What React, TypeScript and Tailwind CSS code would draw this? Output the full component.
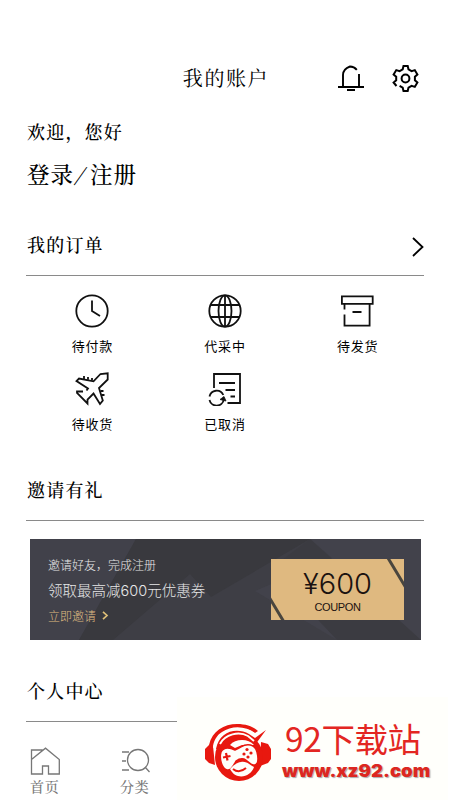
import type { ReactNode } from "react";

const serif = "font-['Noto_Serif_CJK_SC','Liberation_Serif','Noto_Sans_CJK_SC',serif]";
const sans = "font-['Noto_Sans_CJK_SC',sans-serif]";

function BellIcon() {
  return (
    <svg width="26" height="27" viewBox="0 0 26 27" fill="none" stroke="#000" strokeWidth="1.9">
      <path d="M5 21.5V10C5 5.5 8 3 12 1.5C15 1.6 17 2.7 18.8 4.8M21 9V21.5" />
      <path d="M0 22H26M9 25H17" />
    </svg>
  );
}

function GearIcon() {
  return (
    <svg width="27" height="27" viewBox="0 0 27 27" fill="none" stroke="#000" strokeWidth="2">
      <path d="M4.5 21L1.6 17.5L4.2 15.2V11.8L1.6 9.5L4.3 5.1L7.6 6.1L10.7 4.3L11.5 1H15.7L16.5 4.3L19.6 6.1L22.8 5.1L25.4 9.5L22.9 11.8V15.2L25.4 17.5L22.8 21.9L19.6 20.9L16.5 22.7L15.7 26H11.5L10.7 22.7L7.6 20.9" />
      <circle cx="13.5" cy="13.5" r="3.9" />
    </svg>
  );
}

function ClockIcon() {
  return (
    <>
      <circle cx="17" cy="17" r="15.7" />
      <path d="M17 6.5V17L25 22" />
    </>
  );
}

function GlobeIcon() {
  return (
    <>
      <circle cx="17" cy="17" r="15.7" />
      <ellipse cx="17" cy="17" rx="6.5" ry="15.7" />
      <path d="M17 1V33M3 11H31M3 23H31" />
    </>
  );
}

function BoxIcon() {
  return <path d="M.9 2.3H31.7V9.8H.9ZM3.5 10V15.5M3.5 20.5V31.7H28.6V10M11.5 18H20.5" />;
}

function PlaneIcon() {
  return (
    <>
      <path d="M11.5 18.5L13 16.5L1.5 9L4 6.5L18.5 9.3L25.5 2L32.7 1.3V7.5L24 16L27.8 28.5L25 32L18.5 21.5L12.5 27.5V31.5L2 21V19.5H8" />
      <path d="M9 7V4M13 7.8V5M17 8.5V6M25.5 19H28.5M26.5 23H29.5" />
    </>
  );
}

function CancelIcon() {
  return (
    <>
      <path d="M6 16V2H32V31H19.5M11 11H27M17.5 18H27M22.5 24.5H27" />
      <path d="M1.5 24.5A7.3 7.3 0 0 1 15.3 23M15.8 27.5A7.3 7.3 0 0 1 1.5 28" />
      <path d="M12 27.5L16 24.5L18 29Z" fill="#111" strokeWidth=".8" />
    </>
  );
}

const orders: { label: string; icon: ReactNode }[] = [
  { label: "待付款", icon: <ClockIcon /> },
  { label: "代采中", icon: <GlobeIcon /> },
  { label: "待发货", icon: <BoxIcon /> },
  { label: "待收货", icon: <PlaneIcon /> },
  { label: "已取消", icon: <CancelIcon /> },
];

function SectionTitle({ title, arrow }: { title: string; arrow?: boolean }) {
  return (
    <div className="flex h-[54px] items-start justify-between border-b border-[#8a8a8a]">
      <h2 className={`${serif} pl-px text-[18px] leading-[44px] font-medium tracking-[1.2px]`}>{title}</h2>
      {arrow && (
        <svg className="mt-[15px]" width="12" height="20" viewBox="0 0 12 20" fill="none" stroke="#000" strokeWidth="1.8">
          <path d="M1 1L10.5 10L1 19" />
        </svg>
      )}
    </div>
  );
}

function Coupon() {
  return (
    <div className="relative h-[61px] w-[133px] overflow-hidden bg-[#dfb980] text-center text-[#1b1210]">
      <svg className="absolute inset-0" width="133" height="61" stroke="#4a463e" strokeWidth="3">
        <path d="M117 -1L135 29M-2 38L13 63" />
      </svg>
      <div className="mt-[9px] font-['Inter','Liberation_Sans',sans-serif] text-[29px] leading-[32px] font-light">¥600</div>
      <div className="font-['Liberation_Sans',sans-serif] text-[11px] leading-[14px] tracking-[-0.4px]">COUPON</div>
    </div>
  );
}

function Banner() {
  return (
    <div className={`${sans} relative mt-[18px] ml-1 flex h-[101px] w-[391px] items-center overflow-hidden bg-[#3e3e45]`}>
      <svg className="absolute inset-0" width="391" height="101">
        <path d="M0 0H106L49 101H0Z" fill="#41414a" />
        <path d="M106 0H280L181 58L160 35L83 101H49Z" fill="#39393e" />
        <path d="M280 0H391V101H307L225 52L302 19Z" fill="#42424b" />
        <path d="M280 0L391 101H307L240 30Z" fill="#3b3b41" />
      </svg>
      <div className="relative w-[222px] pt-[2px] pl-[18px] font-light text-[#e7e7e8]">
        <p className="text-[12px] leading-[20px]">邀请好友，完成注册</p>
        <p className="mt-[3px] font-['Inter','Noto_Sans_CJK_SC',sans-serif] text-[14.5px] leading-[26px] whitespace-nowrap">
          领取最高减600元优惠券
        </p>
        <p className="mt-px flex items-center text-[12px] leading-[22px] text-[#dfb980]">
          立即邀请
          <svg className="ml-[6px]" width="7" height="9" viewBox="0 0 7 9" fill="none" stroke="#dfc078" strokeWidth="1.7">
            <path d="M1 .8L5 4.5L1 8.2" />
          </svg>
        </p>
      </div>
      <div className="relative ml-[19px]">
        <Coupon />
      </div>
    </div>
  );
}

function TabBar() {
  return (
    <nav className={`${serif} flex gap-[60px] pl-[30px] text-[14px] leading-[20px] font-medium tracking-[.8px] text-[#777]`}>
      <div className="w-[30px]">
        <svg width="30" height="29" viewBox="0 0 30 29" fill="none" stroke="#777" strokeWidth="1.3">
          <path d="M1.5 12.5L15.5 1.2L29.3 12.5V27H18.5V19H12.5V27H1.5ZM1.5 12.5V3H12.5" />
        </svg>
        <span className="whitespace-nowrap">首页</span>
      </div>
      <div className="w-[30px]">
        <svg width="30" height="29" viewBox="0 0 30 29" fill="none" stroke="#777" strokeWidth="1.3">
          <circle cx="18" cy="13" r="10.5" />
          <path d="M25 20L29.5 25M2 5H9M2 14H6M2 23H9" />
        </svg>
        <span className="whitespace-nowrap">分类</span>
      </div>
    </nav>
  );
}

// headset mascot with a game pad across the face
function LogoIcon() {
  return (
    <svg width="68" height="60" viewBox="0 0 68 60">
      <g fill="#e8180f">
        <path d="M5 22C8 8 20 1 33 1C43 1 50 4 54 8L51 10C42 3 28 2 18 9C13 12 10 17 9 23L11 42L5 40L1 36V26Z" />
        <path d="M57 19L64 21L67 26V36L64 40L56 43Z" />
        <circle cx="35" cy="34" r="24" />
      </g>
      <path d="M10 25C13 9 30 3 45 8L52 12L59 8" fill="none" stroke="#fffffb" strokeWidth="2" />
      <path d="M12 26C15 8 33 4 45 11L51 15L62 7L51 22Z" fill="#e8180f" />
      <path d="M16 21C21 11 35 8 44 13L50 18" fill="none" stroke="#fffffb" strokeWidth="2" />
      <path d="M26 22C31 16 44 15 50 22L38 22L31 25Z" fill="#fffffb" />
      <path
        d="M17 29C20 23 27 25 31 27Q34 26 37 24C43 20 51 21 53 29C55 37 54 43 49 42C45 41 43 37 40 36Q36 35 32 38C30 42 27 48 23 47C18 46 15 36 17 29Z"
        fill="#fffffb"
        stroke="#e8180f"
        strokeWidth="1.5"
      />
      <path d="M19 34.5L26.5 33M22 30L23.5 37.5" stroke="#e8180f" strokeWidth="2.2" />
      <path d="M26 46C30 42 32 40 37 39C43 38 46 42 50 44C47 54 32 58 26 46Z" fill="#fffffb" />
      <path d="M29 46Q35 51 42 45" fill="none" stroke="#e8180f" strokeWidth="2" />
      <g fill="#e8180f">
        <circle cx="43" cy="26.5" r="1.6" />
        <circle cx="47" cy="30" r="1.6" />
        <circle cx="40" cy="31" r="1.6" />
        <circle cx="44" cy="34" r="1.6" />
      </g>
    </svg>
  );
}

function SiteBadge() {
  return (
    <div className="absolute top-[697px] left-[177px] flex h-[103px] w-[271px] bg-[#fffffb] pt-[26px] pl-[27px]">
      <LogoIcon />
      <div className="ml-[10px]">
        <div className={`${sans} mt-[-7px] pl-[3px] text-[33.5px] leading-[44px] tracking-[-.4px] whitespace-nowrap text-[#e32622]`}>
          92下载站
        </div>
        <div className="mt-px origin-left scale-x-[1.09] font-['Inter',sans-serif] text-[17px] leading-[20px] font-black text-[#dc2721] [text-shadow:1px_1px_1px_#aaa]">
          www.xz92.com
        </div>
      </div>
    </div>
  );
}

export default function App() {
  return (
    <div className="relative h-[800px] w-[450px] overflow-hidden bg-white text-black">
      <header className="grid grid-cols-[1fr_auto_1fr] items-center pt-[60px]">
        <span />
        <h1 className={`${serif} pl-[2px] text-[20px] leading-[36px] font-normal tracking-[1.6px]`}>我的账户</h1>
        <div className="flex gap-[28px] pl-[69px]">
          <BellIcon />
          <GearIcon />
        </div>
      </header>
      <main className="px-[26px]">
        <div className={`${serif} pt-[22px] pl-px font-medium`}>
          <p className="text-[18px] leading-[26px] tracking-[1.2px]">欢迎，您好</p>
          <p className="mt-[11px] mb-px text-[22.5px] leading-[36px] tracking-[1px]">
            登录<span className="inline-block w-[16px] rotate-[18deg] text-center font-light">/</span>注册
          </p>
        </div>
        <section className="pt-[30px]">
          <SectionTitle title="我的订单" arrow />
          <div className="grid grid-cols-3 gap-y-[14px] pt-[18px]">
            {orders.map((item) => (
              <div key={item.label} className="flex flex-col items-center">
                <svg width="34" height="34" viewBox="0 0 34 34" fill="none" stroke="#111" strokeWidth="1.8">
                  {item.icon}
                </svg>
                <span className={`${sans} mt-[5px] text-[13px] leading-[25px] font-normal tracking-[.8px]`}>{item.label}</span>
              </div>
            ))}
          </div>
        </section>
        <section className="pt-[31px]">
          <SectionTitle title="邀请有礼" />
          <Banner />
        </section>
        <section className="pt-[28px]">
          <SectionTitle title="个人中心" />
        </section>
      </main>
      <div className="pt-[25px]">
        <TabBar />
      </div>
      <SiteBadge />
    </div>
  );
}
